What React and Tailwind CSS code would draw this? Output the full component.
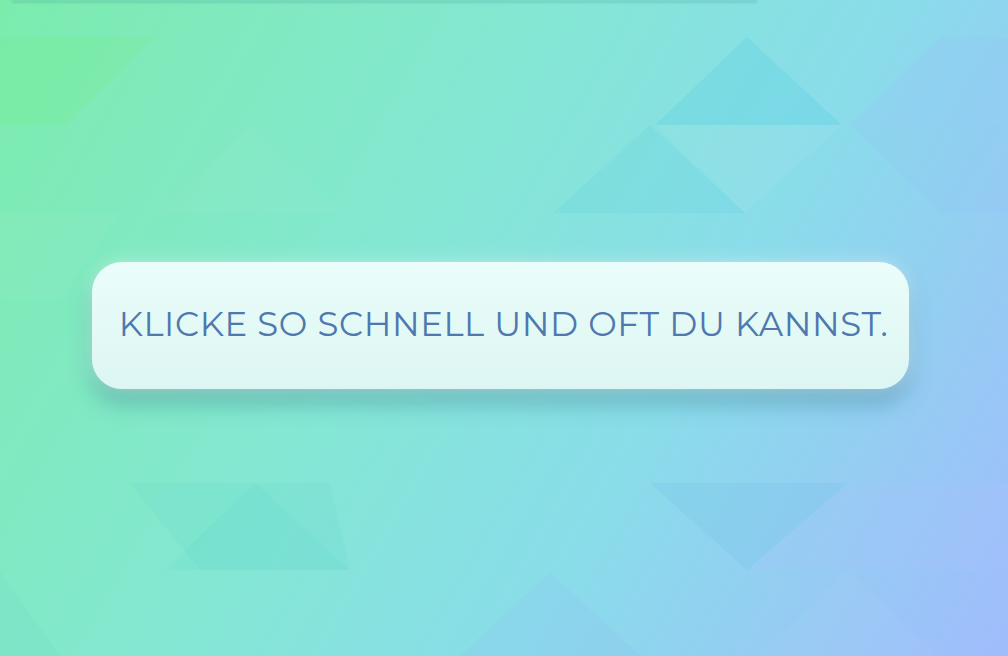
import React from 'react';

// faint low-poly triangles over the gradient
const TRIS = [
  { p: '0,37 155,37 65,125 0,125', f: 'rgba(120,235,150,0.35)' },
  { p: '747,37 655,125 842,125', f: 'rgba(90,210,230,0.30)' },
  { p: '940,37 1008,37 1008,125 850,125', f: 'rgba(150,190,250,0.22)' },
  { p: '650,125 553,213 745,213', f: 'rgba(90,210,225,0.20)' },
  { p: '655,125 842,125 745,213', f: 'rgba(255,255,255,0.05)' },
  { p: '850,125 1008,125 1008,213 940,213', f: 'rgba(150,190,250,0.15)' },
  { p: '0,213 120,213 60,300 0,300', f: 'rgba(255,255,255,0.03)' },
  { p: '250,125 160,213 340,213', f: 'rgba(255,255,255,0.03)' },
  { p: '130,483 330,483 350,570 200,570', f: 'rgba(90,210,200,0.14)' },
  { p: '255,483 165,570 350,570', f: 'rgba(90,215,205,0.14)' },
  { p: '650,483 848,483 747,570', f: 'rgba(110,190,230,0.20)' },
  { p: '848,483 1008,483 1008,570 747,570', f: 'rgba(170,195,255,0.20)' },
  { p: '550,572 460,656 640,656', f: 'rgba(140,180,240,0.15)' },
  { p: '0,572 60,656 0,656', f: 'rgba(90,215,200,0.12)' },
  { p: '848,570 760,656 940,656', f: 'rgba(255,255,255,0.03)' },
];

function Backdrop() {
  return (
    <svg className="absolute inset-0 w-full h-full" viewBox="0 0 1008 656" preserveAspectRatio="none">
      {TRIS.map((t, i) => <polygon key={i} points={t.p} fill={t.f} />)}
    </svg>
  );
}

export default function App() {
  return (
    <div className="relative w-[1008px] h-[656px] overflow-hidden bg-[linear-gradient(120deg,#7cecad_0%,#84e7d4_40%,#8adcea_65%,#a0bcfc_100%)] font-['Montserrat','Lato','Open_Sans',sans-serif]">
      <Backdrop />
      <div className="relative flex flex-col h-full">
        <div className="ml-[12px] w-[745px] h-[3px] bg-[rgba(60,150,150,0.25)] blur-[1px]" />
        <div className="flex justify-center pt-[259px] pr-[7px]">
          <div className="w-[817px] h-[127px] rounded-[30px] bg-[linear-gradient(180deg,#eafdfa_0%,#ddf6f3_100%)] shadow-[0_0_18px_rgba(255,255,255,0.45),0_14px_22px_rgba(30,100,120,0.35)] flex items-center justify-center pl-[6px] pb-[3px]">
            <span className="text-[34px] leading-none text-[#4f78ae] tracking-[0.6px] uppercase">
              Klicke so schnell und oft du kannst.
            </span>
          </div>
        </div>
      </div>
    </div>
  );
}
